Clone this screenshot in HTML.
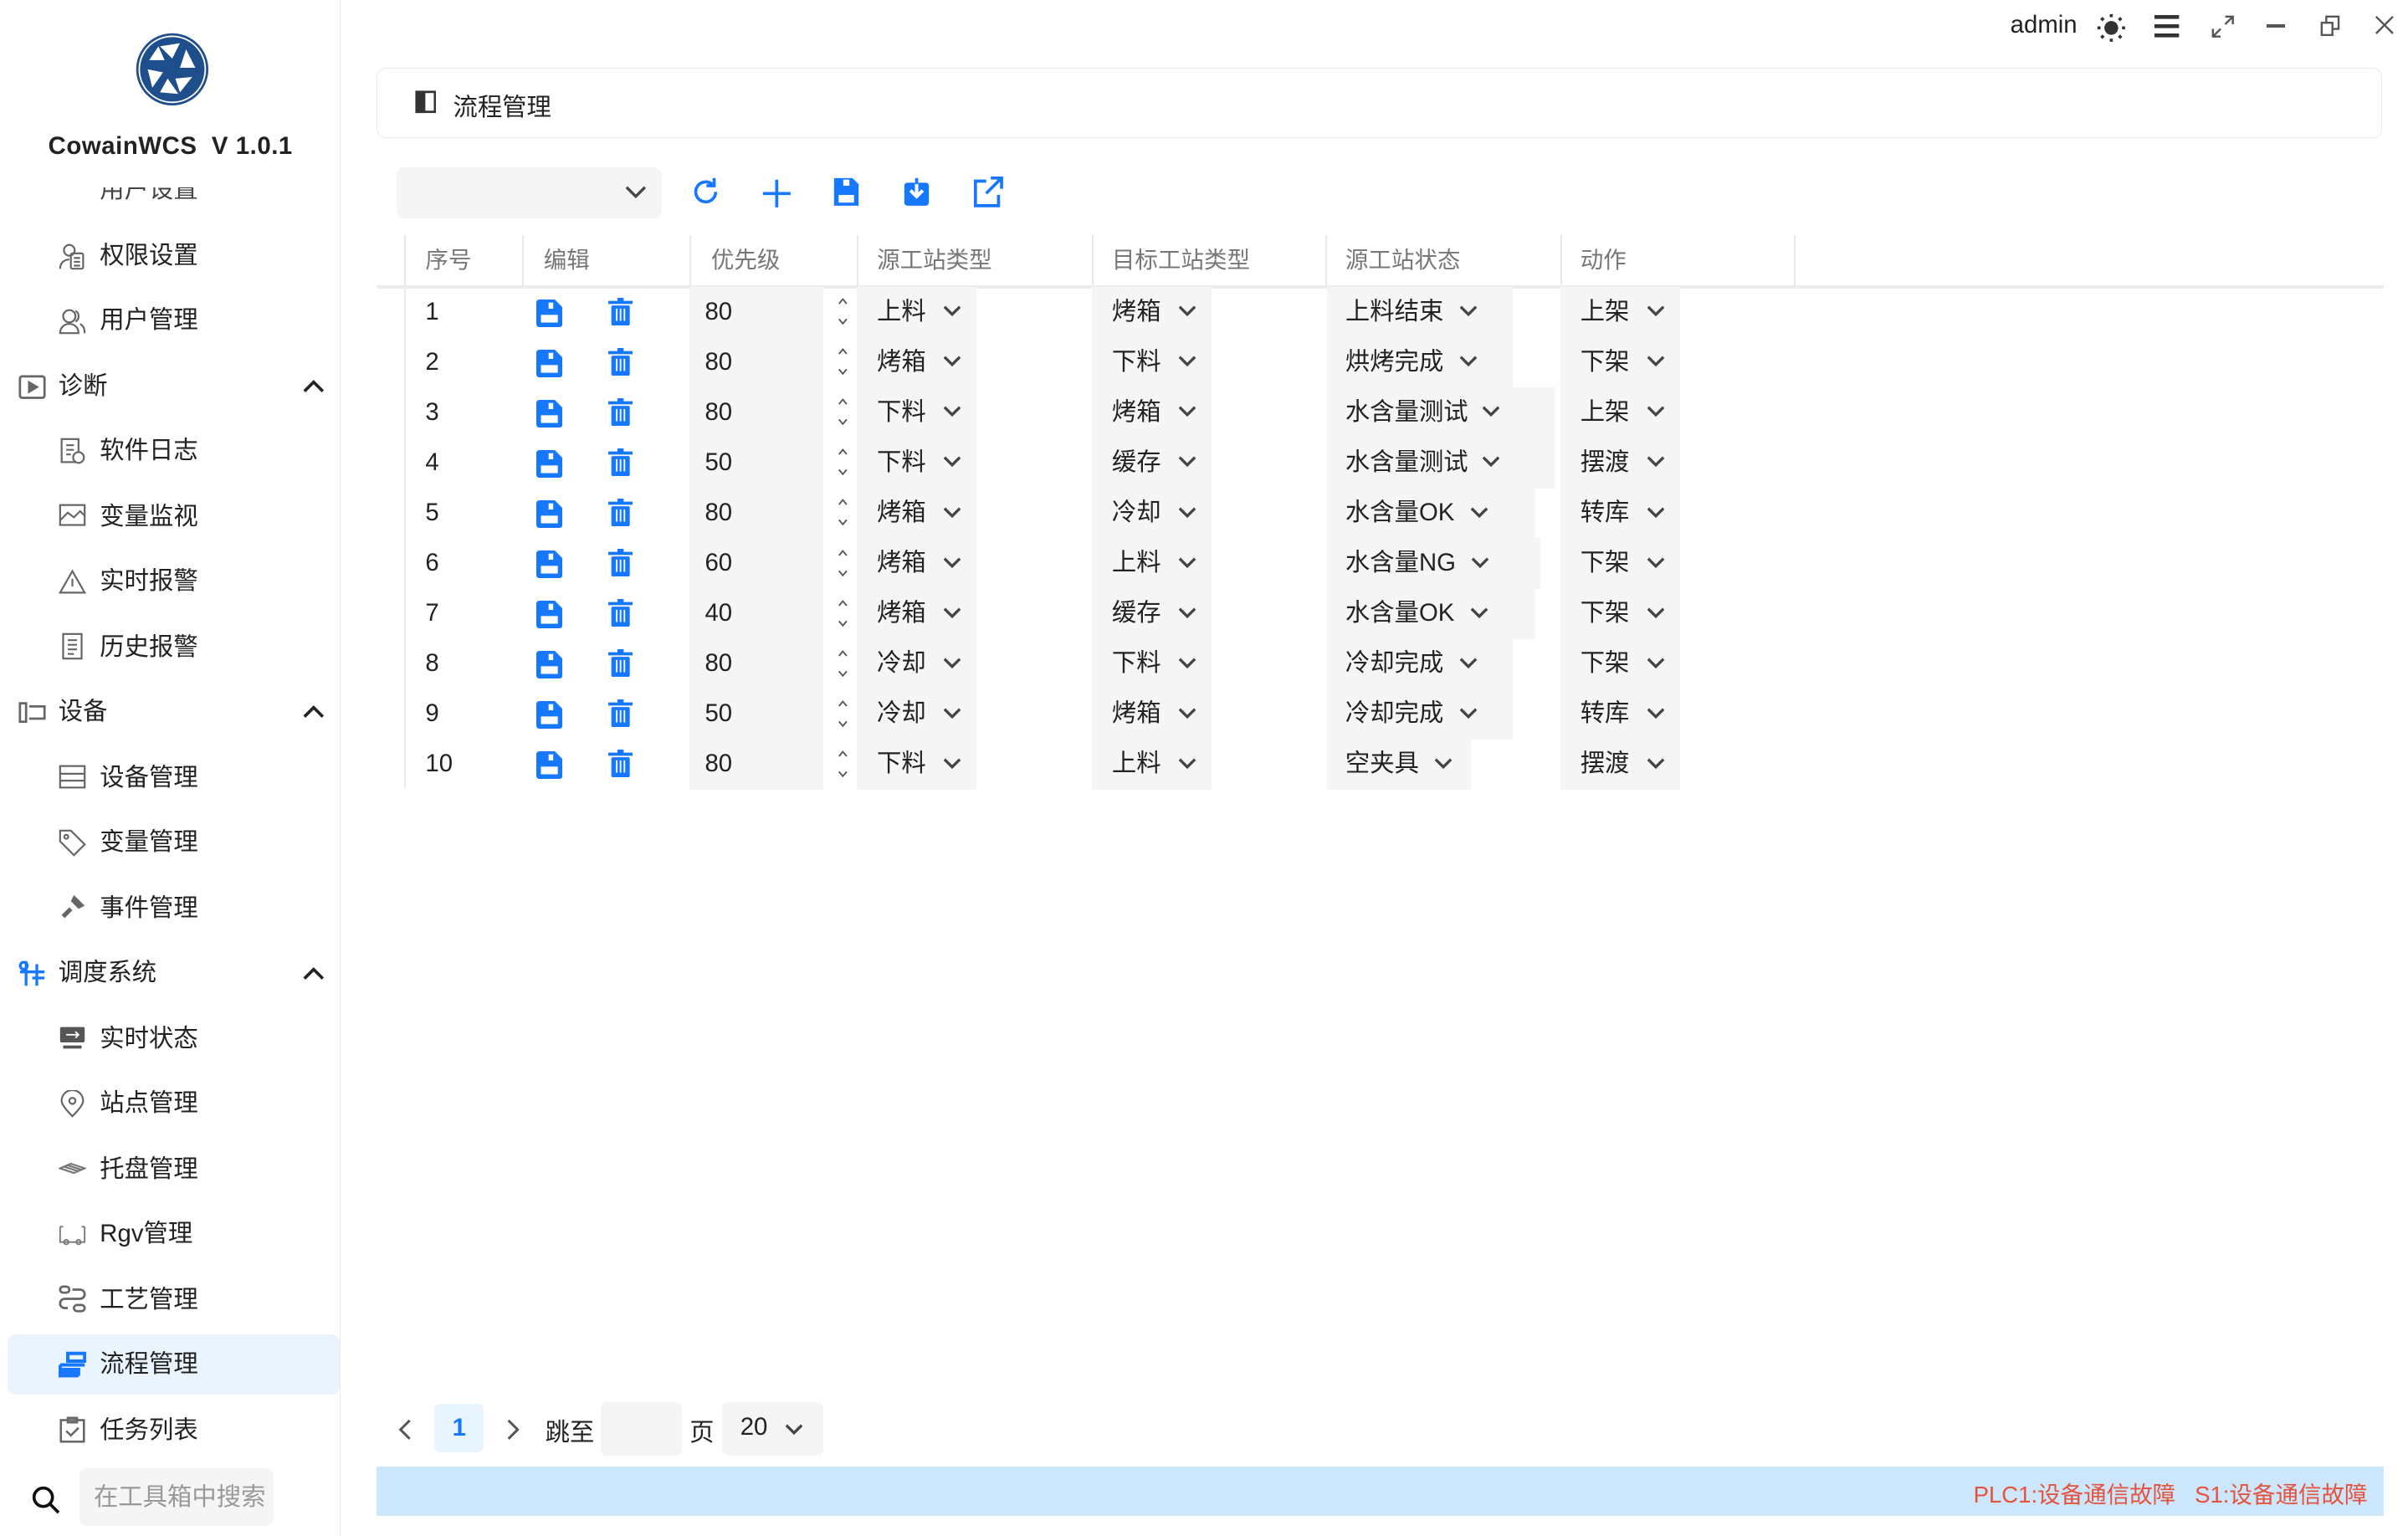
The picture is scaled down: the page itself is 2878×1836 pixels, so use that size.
<!DOCTYPE html>
<html><head><meta charset="utf-8"><style>
html,body{margin:0;padding:0;background:#fff;overflow:hidden}
body{width:2878px;height:1836px}
#w{position:relative;width:1568px;height:1000px;zoom:1.8355;font-family:"Liberation Sans","Noto Sans CJK SC",sans-serif;color:#222;font-size:16px}
.a{position:absolute}
.side{left:0;top:0;width:221px;height:1000px;border-right:1px solid #ececec;background:#fff}
.mi{position:absolute;left:65px;font-size:16px;color:#222;line-height:20px}
.ic{position:absolute;left:38px;width:18px;height:18px}
.gh{position:absolute;left:38px;font-size:16px;line-height:20px}
.th{position:absolute;top:153px;height:33px;line-height:33px;font-size:15px;color:#777}
.vl{position:absolute;top:153px;width:1px;height:33px;background:#e8e8e8}
.row{position:absolute;left:245px;width:1307px;height:33px}
.c{position:absolute;top:0;height:33px;line-height:33px;font-size:16px}
.g{background:#f5f5f5}
.chev{position:absolute;top:11px;width:12px;height:10px}
</style></head><body><div id="w">
<div class="a side">
 <svg class="a" style="left:87px;top:20px" width="50" height="50" viewBox="0 0 50 50">
  <circle cx="25" cy="25" r="23" fill="#1f4e8c" stroke="#1f4e8c" stroke-width="1"/>
  <circle cx="25" cy="25" r="21.5" fill="none" stroke="#fff" stroke-width="1"/>
  <g fill="#fff"><polygon points="17,10 30,8 25,18"/><polygon points="34,12 40,24 30,24"/><polygon points="38,30 30,40 27,31"/><polygon points="29,41 17,40 22,31"/><polygon points="12,37 9,25 19,27"/><polygon points="10,19 16,10 20,19"/></g>
 </svg>
 <div class="a" style="left:0;width:222px;top:86px;text-align:center;font-weight:bold;font-size:16px;letter-spacing:.3px">CowainWCS&nbsp; V 1.0.1</div>
 <div class="a" style="left:0;top:122px;width:221px;height:12px;overflow:hidden"><div class="mi" style="top:-8px;color:#444">用户设置</div></div>
 <svg class="ic" style="top:158px" viewBox="0 0 18 18" fill="none" stroke="#666" stroke-width="1.2"><circle cx="7" cy="5" r="3.5"/><path d="M1 17c0-4 3-6 6-6"/><rect x="8" y="7" width="8" height="10" rx="1"/><path d="M10 10h4M10 12.5h4M10 15h4"/></svg>
 <div class="mi" style="top:157px">权限设置</div>
 <svg class="ic" style="top:200px" viewBox="0 0 18 18" fill="none" stroke="#666" stroke-width="1.2"><circle cx="7" cy="6" r="4"/><path d="M1 17c0-4 3-6 6-6s6 2 6 6z"/><path d="M11 2.5a4 4 0 0 1 0 7M14 11c2 1 3 3 3 6"/></svg>
 <div class="mi" style="top:199px">用户管理</div>
 <svg class="a" style="left:12px;top:244px" width="18" height="16" viewBox="0 0 18 16" fill="none" stroke="#666" stroke-width="1.5"><rect x="1" y="1" width="16" height="14" rx="1.5"/><path d="M7 5v6l5-3z" fill="#666"/></svg>
 <div class="gh" style="top:242px">诊断</div>
 <svg class="a" style="left:197px;top:247px" width="14" height="9" viewBox="0 0 14 9" fill="none" stroke="#222" stroke-width="2"><path d="M1 8l6-6 6 6"/></svg>
 <svg class="ic" style="top:285px" viewBox="0 0 18 18" fill="none" stroke="#666" stroke-width="1.2"><rect x="2" y="1" width="11" height="15"/><path d="M5 5h5M5 8h5M5 11h3"/><circle cx="13" cy="13" r="3.5" fill="#fff"/></svg>
 <div class="mi" style="top:284px">软件日志</div>
 <svg class="ic" style="top:327px" viewBox="0 0 18 18" fill="none" stroke="#666" stroke-width="1.2"><rect x="1" y="2" width="16" height="13"/><path d="M1 12l5-5 4 3 4-4 3 3"/></svg>
 <div class="mi" style="top:327px">变量监视</div>
 <svg class="ic" style="top:370px" viewBox="0 0 18 18" fill="none" stroke="#666" stroke-width="1.2"><path d="M1 16L9 2l8 14z"/><path d="M9 7v5"/></svg>
 <div class="mi" style="top:369px">实时报警</div>
 <svg class="ic" style="top:412px" viewBox="0 0 18 18" fill="none" stroke="#666" stroke-width="1.2"><rect x="3" y="1" width="12" height="16"/><path d="M6 5h6M6 8h6M6 11h6M6 14h4"/></svg>
 <div class="mi" style="top:412px">历史报警</div>
 <svg class="a" style="left:12px;top:456px" width="18" height="16" viewBox="0 0 18 16" fill="none" stroke="#666" stroke-width="1.5"><rect x="1" y="2" width="4" height="12"/><path d="M7 4h10v8H7"/></svg>
 <div class="gh" style="top:454px">设备</div>
 <svg class="a" style="left:197px;top:459px" width="14" height="9" viewBox="0 0 14 9" fill="none" stroke="#222" stroke-width="2"><path d="M1 8l6-6 6 6"/></svg>
 <svg class="ic" style="top:497px" viewBox="0 0 18 18" fill="none" stroke="#666" stroke-width="1.2"><rect x="1" y="2" width="16" height="14"/><path d="M1 7h16M1 11.5h16"/></svg>
 <div class="mi" style="top:497px">设备管理</div>
 <svg class="ic" style="top:540px" viewBox="0 0 18 18" fill="none" stroke="#666" stroke-width="1.2"><path d="M1 1h7l9 9-7 7-9-9z"/><circle cx="5" cy="5" r="1.3"/></svg>
 <div class="mi" style="top:539px">变量管理</div>
 <svg class="ic" style="top:582px" viewBox="0 0 18 18" fill="#666"><path d="M10 1l7 7-4 2-5-5z"/><path d="M2 14l5-5 2 2-5 5z"/></svg>
 <div class="mi" style="top:582px">事件管理</div>
 <svg class="a" style="left:12px;top:625px" width="18" height="18" viewBox="0 0 18 18" fill="none" stroke="#1677ff" stroke-width="1.8"><path d="M5 1v16M12 3v14M1 8h16M9 12h8"/><circle cx="3.5" cy="4" r="2.3"/></svg>
 <div class="gh" style="top:624px">调度系统</div>
 <svg class="a" style="left:197px;top:629px" width="14" height="9" viewBox="0 0 14 9" fill="none" stroke="#222" stroke-width="2"><path d="M1 8l6-6 6 6"/></svg>
 <svg class="ic" style="top:667px" viewBox="0 0 18 18" fill="#555"><rect x="1" y="2" width="16" height="10" rx="1"/><rect x="3" y="14" width="12" height="2"/><path d="M5 7h8M11 5l2 2-2 2" stroke="#fff" fill="none"/></svg>
 <div class="mi" style="top:667px">实时状态</div>
 <svg class="ic" style="top:710px" viewBox="0 0 18 18" fill="none" stroke="#666" stroke-width="1.2"><path d="M9 17C4 12 2 9 2 7a7 7 0 0 1 14 0c0 2-2 5-7 10z"/><circle cx="9" cy="7" r="2"/></svg>
 <div class="mi" style="top:709px">站点管理</div>
 <svg class="ic" style="top:752px" viewBox="0 0 18 18" fill="none" stroke="#777" stroke-width="1.2"><path d="M1 9l7-3 9 3-7 3zM4 8l9 3M6 7l9 3"/></svg>
 <div class="mi" style="top:752px">托盘管理</div>
 <svg class="ic" style="top:795px" viewBox="0 0 18 18" fill="none" stroke="#777" stroke-width="1"><path d="M1 4v10h16V4M1 4h2M15 4h2"/><circle cx="5" cy="14" r="1.5"/><circle cx="13" cy="14" r="1.5"/></svg>
 <div class="mi" style="top:794px">Rgv管理</div>
 <svg class="ic" style="top:837px" viewBox="0 0 18 18" fill="none" stroke="#666" stroke-width="1.5"><rect x="1" y="1" width="6" height="4" rx="2"/><path d="M9 3h5a3 3 0 0 1 0 6H4a3 3 0 0 0 0 6h2"/><rect x="10" y="13" width="7" height="4" rx="2"/></svg>
 <div class="mi" style="top:837px">工艺管理</div>
 <div class="a" style="left:5px;top:869px;width:216px;height:39px;background:#e9f4ff;border-radius:5px"></div>
 <svg class="ic" style="top:880px" viewBox="0 0 18 18" fill="none" stroke="#1677ff" stroke-width="2.2"><rect x="6" y="1.5" width="11" height="5"/><path d="M1 9h16M1 9v7h12"/><rect x="1" y="12" width="12" height="3" fill="#1677ff"/></svg>
 <div class="mi" style="top:879px">流程管理</div>
 <svg class="ic" style="top:922px" viewBox="0 0 18 18" fill="none" stroke="#666" stroke-width="1.4"><rect x="1.5" y="3" width="15" height="14"/><path d="M6 1.5h6v3H6z"/><path d="M5 10l3 3 5-5"/></svg>
 <div class="mi" style="top:922px">任务列表</div>
 <svg class="a" style="left:20px;top:967px" width="20" height="20" viewBox="0 0 20 20" fill="none" stroke="#111" stroke-width="2"><circle cx="8" cy="8" r="6"/><path d="M12.5 12.5L18 18"/></svg>
 <div class="a" style="left:52px;top:956px;width:126px;height:38px;background:#f5f5f5;border-radius:5px;color:#999;line-height:38px;padding-left:9px;box-sizing:border-box;font-size:16px">在工具箱中搜索</div>
</div>

<div class="a" style="left:1309px;top:7px;font-size:16px;color:#222">admin</div>
<svg class="a" style="left:1365px;top:8px" width="20" height="20" viewBox="0 0 20 20" fill="#333"><circle cx="10" cy="10" r="4.5"/><g stroke="#333" stroke-width="2"><path d="M10 1v2M10 17v2M1 10h2M17 10h2M3.5 3.5l1.5 1.5M15 15l1.5 1.5M3.5 16.5L5 15M15 5l1.5-1.5"/></g></svg>
<svg class="a" style="left:1403px;top:10px" width="16" height="15" viewBox="0 0 16 15" fill="#333"><rect y="0" width="16" height="2.5"/><rect y="6" width="16" height="2.5"/><rect y="12" width="16" height="2.5"/></svg>
<svg class="a" style="left:1440px;top:10px" width="15" height="15" viewBox="0 0 15 15" fill="none" stroke="#555" stroke-width="1.3"><path d="M9 1h5v5M14 1L9 6M6 14H1V9M1 14l5-5"/></svg>
<div class="a" style="left:1476px;top:16px;width:12px;height:2px;background:#555"></div>
<svg class="a" style="left:1511px;top:10px" width="13" height="14" viewBox="0 0 13 14" fill="none" stroke="#555" stroke-width="1.3"><rect x="1" y="5" width="7" height="8"/><path d="M4 5V1h8v8H8"/></svg>
<svg class="a" style="left:1546px;top:10px" width="13" height="13" viewBox="0 0 13 13" stroke="#555" stroke-width="1.3"><path d="M1 1l11 11M12 1L1 12"/></svg>

<div class="a" style="left:245px;top:44px;width:1305px;height:45px;border:1px solid #ebebeb;border-radius:6px"></div>
<svg class="a" style="left:270px;top:59px" width="14" height="15" viewBox="0 0 14 15" fill="none" stroke="#333" stroke-width="1.5"><rect x="1" y="1" width="12" height="13"/><rect x="1" y="1" width="5" height="13" fill="#333"/></svg>
<div class="a" style="left:295px;top:57px;font-size:16px">流程管理</div>

<div class="a" style="left:258px;top:109px;width:173px;height:33px;background:#f5f5f5;border-radius:5px"></div>
<svg class="a" style="left:407px;top:121px" width="14" height="9" viewBox="0 0 14 9" fill="none" stroke="#444" stroke-width="1.8"><path d="M1 1l6 6 6-6"/></svg>
<svg class="a" style="left:450px;top:115px" width="20" height="20" viewBox="0 0 20 20" fill="none" stroke="#1677ff" stroke-width="2"><path d="M16 10a6.5 6.5 0 1 1-2-4.7"/><path d="M15 1v5h-5"/></svg>
<svg class="a" style="left:496px;top:116px" width="20" height="20" viewBox="0 0 20 20" stroke="#1677ff" stroke-width="2"><path d="M10 1v18M1 10h18"/></svg>
<svg class="a" style="left:542px;top:115px" width="18" height="20" viewBox="0 0 18 20" fill="#1677ff"><path d="M1 1h12l4 4v14H1z"/><rect x="4" y="12" width="10" height="5" fill="#fff"/><rect x="7" y="2" width="4" height="4" fill="#fff"/></svg>
<svg class="a" style="left:588px;top:115px" width="18" height="20" viewBox="0 0 18 20"><rect x="1" y="4" width="16" height="15" rx="2" fill="#1677ff"/><path d="M9 1v12M5 9l4 4 4-4" stroke="#fff" stroke-width="2.2" fill="none"/><path d="M9 1v4" stroke="#1677ff" stroke-width="2"/></svg>
<svg class="a" style="left:634px;top:115px" width="19" height="20" viewBox="0 0 19 20" fill="none" stroke="#1677ff" stroke-width="2"><path d="M8 3H1v16h15v-7"/><path d="M11 1h7v7M18 1L8 11"/></svg>

<div class="a" style="left:245px;top:186px;width:1307px;height:2px;background:#ececec"></div>
<div class="vl" style="left:263px"></div><div class="vl" style="left:340px"></div><div class="vl" style="left:449px"></div><div class="vl" style="left:558px"></div><div class="vl" style="left:711px"></div><div class="vl" style="left:863px"></div><div class="vl" style="left:1016px"></div><div class="vl" style="left:1168px"></div>
<div class="th" style="left:277px">序号</div><div class="th" style="left:354px">编辑</div><div class="th" style="left:463px">优先级</div><div class="th" style="left:571px">源工站类型</div><div class="th" style="left:724px">目标工站类型</div><div class="th" style="left:876px">源工站状态</div><div class="th" style="left:1029px">动作</div>
<div class="a" style="left:263px;top:187px;width:1px;height:327px;background:#ececec"></div>

<svg width="0" height="0" style="position:absolute"><defs>
<symbol id="ch" viewBox="0 0 12 10"><path d="M1 2l5 5 5-5" fill="none" stroke="#444" stroke-width="1.8"/></symbol>
<symbol id="sv" viewBox="0 0 17 18"><path d="M0 2a2 2 0 0 1 2-2h10l5 5v11a2 2 0 0 1-2 2H2a2 2 0 0 1-2-2z" fill="#1677ff"/><rect x="3" y="10" width="11" height="5" fill="#fff"/><rect x="8" y="2" width="3" height="4" fill="#fff"/></symbol>
<symbol id="tr" viewBox="0 0 16 18"><path d="M6 0h4v2h6v2H0V2h6z" fill="#1677ff"/><rect x="2" y="5" width="12" height="13" rx="1" fill="#1677ff"/><path d="M5.5 7v8M8 7v8M10.5 7v8" stroke="#fff" stroke-width="1"/></symbol>
<symbol id="sp" viewBox="0 0 8 20"><path d="M1.5 5l2.5-3 2.5 3M1.5 15l2.5 3 2.5-3" fill="none" stroke="#555" stroke-width="1"/></symbol>
</defs></svg>

<div class="row" style="top:187px"><div class="c" style="left:32px">1</div><svg class="a" style="left:104px;top:8px" width="17" height="18"><use href="#sv"/></svg><svg class="a" style="left:151px;top:7px" width="16" height="18"><use href="#tr"/></svg><div class="c g" style="left:204px;width:87px;padding-left:10px;box-sizing:border-box">80</div><svg class="a" style="left:300px;top:5px" width="8" height="22"><use href="#sp"/></svg><div class="c g" style="left:313px;width:78px;padding-left:13px;box-sizing:border-box">上料<svg class="chev" style="left:56px"><use href="#ch"/></svg></div><div class="c g" style="left:466px;width:78px;padding-left:13px;box-sizing:border-box">烤箱<svg class="chev" style="left:56px"><use href="#ch"/></svg></div><div class="c g" style="left:619px;width:121px;padding-left:12px;box-sizing:border-box">上料结束<svg class="chev" style="left:86px"><use href="#ch"/></svg></div><div class="c g" style="left:771px;width:78px;padding-left:13px;box-sizing:border-box">上架<svg class="chev" style="left:56px"><use href="#ch"/></svg></div></div>

<div class="row" style="top:219.7px"><div class="c" style="left:32px">2</div><svg class="a" style="left:104px;top:8px" width="17" height="18"><use href="#sv"/></svg><svg class="a" style="left:151px;top:7px" width="16" height="18"><use href="#tr"/></svg><div class="c g" style="left:204px;width:87px;padding-left:10px;box-sizing:border-box">80</div><svg class="a" style="left:300px;top:5px" width="8" height="22"><use href="#sp"/></svg><div class="c g" style="left:313px;width:78px;padding-left:13px;box-sizing:border-box">烤箱<svg class="chev" style="left:56px"><use href="#ch"/></svg></div><div class="c g" style="left:466px;width:78px;padding-left:13px;box-sizing:border-box">下料<svg class="chev" style="left:56px"><use href="#ch"/></svg></div><div class="c g" style="left:619px;width:121px;padding-left:12px;box-sizing:border-box">烘烤完成<svg class="chev" style="left:86px"><use href="#ch"/></svg></div><div class="c g" style="left:771px;width:78px;padding-left:13px;box-sizing:border-box">下架<svg class="chev" style="left:56px"><use href="#ch"/></svg></div></div>

<div class="row" style="top:252.4px"><div class="c" style="left:32px">3</div><svg class="a" style="left:104px;top:8px" width="17" height="18"><use href="#sv"/></svg><svg class="a" style="left:151px;top:7px" width="16" height="18"><use href="#tr"/></svg><div class="c g" style="left:204px;width:87px;padding-left:10px;box-sizing:border-box">80</div><svg class="a" style="left:300px;top:5px" width="8" height="22"><use href="#sp"/></svg><div class="c g" style="left:313px;width:78px;padding-left:13px;box-sizing:border-box">下料<svg class="chev" style="left:56px"><use href="#ch"/></svg></div><div class="c g" style="left:466px;width:78px;padding-left:13px;box-sizing:border-box">烤箱<svg class="chev" style="left:56px"><use href="#ch"/></svg></div><div class="c g" style="left:619px;width:149px;padding-left:12px;box-sizing:border-box">水含量测试<svg class="chev" style="left:101px"><use href="#ch"/></svg></div><div class="c g" style="left:771px;width:78px;padding-left:13px;box-sizing:border-box">上架<svg class="chev" style="left:56px"><use href="#ch"/></svg></div></div>

<div class="row" style="top:285.1px"><div class="c" style="left:32px">4</div><svg class="a" style="left:104px;top:8px" width="17" height="18"><use href="#sv"/></svg><svg class="a" style="left:151px;top:7px" width="16" height="18"><use href="#tr"/></svg><div class="c g" style="left:204px;width:87px;padding-left:10px;box-sizing:border-box">50</div><svg class="a" style="left:300px;top:5px" width="8" height="22"><use href="#sp"/></svg><div class="c g" style="left:313px;width:78px;padding-left:13px;box-sizing:border-box">下料<svg class="chev" style="left:56px"><use href="#ch"/></svg></div><div class="c g" style="left:466px;width:78px;padding-left:13px;box-sizing:border-box">缓存<svg class="chev" style="left:56px"><use href="#ch"/></svg></div><div class="c g" style="left:619px;width:149px;padding-left:12px;box-sizing:border-box">水含量测试<svg class="chev" style="left:101px"><use href="#ch"/></svg></div><div class="c g" style="left:771px;width:78px;padding-left:13px;box-sizing:border-box">摆渡<svg class="chev" style="left:56px"><use href="#ch"/></svg></div></div>

<div class="row" style="top:317.8px"><div class="c" style="left:32px">5</div><svg class="a" style="left:104px;top:8px" width="17" height="18"><use href="#sv"/></svg><svg class="a" style="left:151px;top:7px" width="16" height="18"><use href="#tr"/></svg><div class="c g" style="left:204px;width:87px;padding-left:10px;box-sizing:border-box">80</div><svg class="a" style="left:300px;top:5px" width="8" height="22"><use href="#sp"/></svg><div class="c g" style="left:313px;width:78px;padding-left:13px;box-sizing:border-box">烤箱<svg class="chev" style="left:56px"><use href="#ch"/></svg></div><div class="c g" style="left:466px;width:78px;padding-left:13px;box-sizing:border-box">冷却<svg class="chev" style="left:56px"><use href="#ch"/></svg></div><div class="c g" style="left:619px;width:136px;padding-left:12px;box-sizing:border-box">水含量OK<svg class="chev" style="left:93px"><use href="#ch"/></svg></div><div class="c g" style="left:771px;width:78px;padding-left:13px;box-sizing:border-box">转库<svg class="chev" style="left:56px"><use href="#ch"/></svg></div></div>

<div class="row" style="top:350.5px"><div class="c" style="left:32px">6</div><svg class="a" style="left:104px;top:8px" width="17" height="18"><use href="#sv"/></svg><svg class="a" style="left:151px;top:7px" width="16" height="18"><use href="#tr"/></svg><div class="c g" style="left:204px;width:87px;padding-left:10px;box-sizing:border-box">60</div><svg class="a" style="left:300px;top:5px" width="8" height="22"><use href="#sp"/></svg><div class="c g" style="left:313px;width:78px;padding-left:13px;box-sizing:border-box">烤箱<svg class="chev" style="left:56px"><use href="#ch"/></svg></div><div class="c g" style="left:466px;width:78px;padding-left:13px;box-sizing:border-box">上料<svg class="chev" style="left:56px"><use href="#ch"/></svg></div><div class="c g" style="left:619px;width:139px;padding-left:12px;box-sizing:border-box">水含量NG<svg class="chev" style="left:94px"><use href="#ch"/></svg></div><div class="c g" style="left:771px;width:78px;padding-left:13px;box-sizing:border-box">下架<svg class="chev" style="left:56px"><use href="#ch"/></svg></div></div>

<div class="row" style="top:383.2px"><div class="c" style="left:32px">7</div><svg class="a" style="left:104px;top:8px" width="17" height="18"><use href="#sv"/></svg><svg class="a" style="left:151px;top:7px" width="16" height="18"><use href="#tr"/></svg><div class="c g" style="left:204px;width:87px;padding-left:10px;box-sizing:border-box">40</div><svg class="a" style="left:300px;top:5px" width="8" height="22"><use href="#sp"/></svg><div class="c g" style="left:313px;width:78px;padding-left:13px;box-sizing:border-box">烤箱<svg class="chev" style="left:56px"><use href="#ch"/></svg></div><div class="c g" style="left:466px;width:78px;padding-left:13px;box-sizing:border-box">缓存<svg class="chev" style="left:56px"><use href="#ch"/></svg></div><div class="c g" style="left:619px;width:136px;padding-left:12px;box-sizing:border-box">水含量OK<svg class="chev" style="left:93px"><use href="#ch"/></svg></div><div class="c g" style="left:771px;width:78px;padding-left:13px;box-sizing:border-box">下架<svg class="chev" style="left:56px"><use href="#ch"/></svg></div></div>

<div class="row" style="top:415.9px"><div class="c" style="left:32px">8</div><svg class="a" style="left:104px;top:8px" width="17" height="18"><use href="#sv"/></svg><svg class="a" style="left:151px;top:7px" width="16" height="18"><use href="#tr"/></svg><div class="c g" style="left:204px;width:87px;padding-left:10px;box-sizing:border-box">80</div><svg class="a" style="left:300px;top:5px" width="8" height="22"><use href="#sp"/></svg><div class="c g" style="left:313px;width:78px;padding-left:13px;box-sizing:border-box">冷却<svg class="chev" style="left:56px"><use href="#ch"/></svg></div><div class="c g" style="left:466px;width:78px;padding-left:13px;box-sizing:border-box">下料<svg class="chev" style="left:56px"><use href="#ch"/></svg></div><div class="c g" style="left:619px;width:121px;padding-left:12px;box-sizing:border-box">冷却完成<svg class="chev" style="left:86px"><use href="#ch"/></svg></div><div class="c g" style="left:771px;width:78px;padding-left:13px;box-sizing:border-box">下架<svg class="chev" style="left:56px"><use href="#ch"/></svg></div></div>

<div class="row" style="top:448.6px"><div class="c" style="left:32px">9</div><svg class="a" style="left:104px;top:8px" width="17" height="18"><use href="#sv"/></svg><svg class="a" style="left:151px;top:7px" width="16" height="18"><use href="#tr"/></svg><div class="c g" style="left:204px;width:87px;padding-left:10px;box-sizing:border-box">50</div><svg class="a" style="left:300px;top:5px" width="8" height="22"><use href="#sp"/></svg><div class="c g" style="left:313px;width:78px;padding-left:13px;box-sizing:border-box">冷却<svg class="chev" style="left:56px"><use href="#ch"/></svg></div><div class="c g" style="left:466px;width:78px;padding-left:13px;box-sizing:border-box">烤箱<svg class="chev" style="left:56px"><use href="#ch"/></svg></div><div class="c g" style="left:619px;width:121px;padding-left:12px;box-sizing:border-box">冷却完成<svg class="chev" style="left:86px"><use href="#ch"/></svg></div><div class="c g" style="left:771px;width:78px;padding-left:13px;box-sizing:border-box">转库<svg class="chev" style="left:56px"><use href="#ch"/></svg></div></div>

<div class="row" style="top:481.3px"><div class="c" style="left:32px">10</div><svg class="a" style="left:104px;top:8px" width="17" height="18"><use href="#sv"/></svg><svg class="a" style="left:151px;top:7px" width="16" height="18"><use href="#tr"/></svg><div class="c g" style="left:204px;width:87px;padding-left:10px;box-sizing:border-box">80</div><svg class="a" style="left:300px;top:5px" width="8" height="22"><use href="#sp"/></svg><div class="c g" style="left:313px;width:78px;padding-left:13px;box-sizing:border-box">下料<svg class="chev" style="left:56px"><use href="#ch"/></svg></div><div class="c g" style="left:466px;width:78px;padding-left:13px;box-sizing:border-box">上料<svg class="chev" style="left:56px"><use href="#ch"/></svg></div><div class="c g" style="left:619px;width:94px;padding-left:12px;box-sizing:border-box">空夹具<svg class="chev" style="left:70px"><use href="#ch"/></svg></div><div class="c g" style="left:771px;width:78px;padding-left:13px;box-sizing:border-box">摆渡<svg class="chev" style="left:56px"><use href="#ch"/></svg></div></div>

<svg class="a" style="left:259px;top:924px" width="10" height="14" viewBox="0 0 10 14" fill="none" stroke="#555" stroke-width="1.6"><path d="M8 1L2 7l6 6"/></svg>
<div class="a" style="left:283px;top:914px;width:32px;height:32px;background:#e8f4ff;border-radius:4px;color:#1677ff;text-align:center;line-height:32px;font-weight:bold;font-size:16px">1</div>
<svg class="a" style="left:329px;top:924px" width="10" height="14" viewBox="0 0 10 14" fill="none" stroke="#555" stroke-width="1.6"><path d="M2 1l6 6-6 6"/></svg>
<div class="a" style="left:355px;top:920px;font-size:16px">跳至</div>
<div class="a" style="left:391px;top:913px;width:53px;height:35px;background:#f5f5f5;border-radius:4px"></div>
<div class="a" style="left:449px;top:920px;font-size:16px">页</div>
<div class="a" style="left:470px;top:913px;width:66px;height:35px;background:#f5f5f5;border-radius:4px"></div>
<div class="a" style="left:482px;top:920px;font-size:16px">20</div>
<svg class="a" style="left:511px;top:926px" width="12" height="10"><use href="#ch"/></svg>

<div class="a" style="left:245px;top:955px;width:1307px;height:32px;background:#cce6fb"></div>
<div class="a" style="left:1285px;top:961px;font-size:15px;color:#e5533d">PLC1:设备通信故障&nbsp;&nbsp; S1:设备通信故障</div>
</div></body></html>
